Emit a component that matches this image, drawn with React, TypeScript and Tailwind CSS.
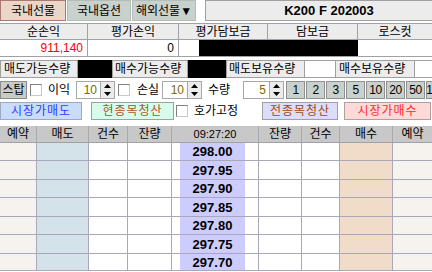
const F = "font-['Liberation_Sans','Noto_Sans_CJK_KR',sans-serif]";

const prices = ["298.00", "297.95", "297.90", "297.85", "297.80", "297.75", "297.70"];
const rowH = [18, 19, 18, 19, 18, 19, 17];

// order book columns: width, header, body background
const cols = [
	{ w: "w-[37px]", label: "예약", bg: "bg-[#f6f3ef]" },
	{ w: "w-[52px]", label: "매도", bg: "bg-[#d3e3e9]" },
	{ w: "w-[39px]", label: "건수", bg: "bg-white" },
	{ w: "w-[44px]", label: "잔량", bg: "bg-white" },
	{ w: "w-[87px]", label: "09:27:20", bg: "bg-white" },
	{ w: "w-[43px]", label: "잔량", bg: "bg-white" },
	{ w: "w-[38px]", label: "건수", bg: "bg-white" },
	{ w: "w-[53px]", label: "매수", bg: "bg-[#f0dcc9]" },
	{ w: "w-[39px]", label: "예약", bg: "bg-[#f6f3ef]" },
];

function Check() {
	return <div className="h-[12px] w-[12px] shrink-0 border border-t-[#808080] border-l-[#808080] border-r-[#c8c8c8] border-b-[#c8c8c8] bg-white" />;
}

function Spin({ value, inputW }: { value: string; inputW: string }) {
	return (
		<div className="flex h-[18px] shrink-0">
			<div className={`flex ${inputW} items-center justify-end border border-[#a8a8a8] bg-white pr-[3px] text-[12px] text-[#7a6a00]`}>
				{value}
			</div>
			<div className="flex w-[14px] flex-col border border-l-0 border-[#a8a8a8] bg-[#ececec]">
				<div className="flex flex-1 items-center justify-center">
					<svg width="7" height="4" viewBox="0 0 7 4">
						<path d="M3.5 0 L7 4 L0 4 Z" fill="#000" />
					</svg>
				</div>
				<div className="flex flex-1 items-center justify-center">
					<svg width="7" height="4" viewBox="0 0 7 4">
						<path d="M0 0 L7 0 L3.5 4 Z" fill="#000" />
					</svg>
				</div>
			</div>
		</div>
	);
}

export default function App() {
	return (
		<div className={`${F} h-[272px] w-[432px] overflow-hidden bg-white text-[12px] leading-none text-black`}>
			{/* market tabs + symbol */}
			<div className="flex h-[22px] items-start">
				<div className="flex h-[21px] w-[66px] items-center justify-center border border-[#a87a72] bg-[#e9d6c6] text-[12px]">국내선물</div>
				<div className="ml-[1px] flex h-[21px] w-[64px] items-center justify-center border border-[#b4bcb8] bg-[#c9d1cd]">국내옵션</div>
				<div className="ml-[1px] flex h-[21px] w-[64px] items-center justify-center border border-[#b4bcb8] bg-[#c9d1cd]">
					해외선물▼
				</div>
				<div className="ml-[9px] flex h-[21px] flex-1 items-center justify-center border border-r-0 border-[#a0a0a0] bg-[#ececec] pl-[20px] text-[13px] font-bold">
					K200 F 202003
				</div>
			</div>

			{/* P&L summary */}
			<div className="mt-[1px] grid h-[17px] grid-cols-[88px_91px_89px_90px_1fr] border-t border-b border-[#a0a0a8] bg-[#ececec]">
				<div className="flex items-center justify-center border-r border-[#a0a0a8]">순손익</div>
				<div className="flex items-center justify-center border-r border-[#a0a0a8]">평가손익</div>
				<div className="flex items-center justify-center border-r border-[#a0a0a8]">평가담보금</div>
				<div className="flex items-center justify-center border-r border-[#a0a0a8]">담보금</div>
				<div className="flex items-center justify-center">로스컷</div>
			</div>
			<div className="flex h-[17px] border-b border-[#a0a0a8]">
				<div className="flex w-[88px] items-center justify-end border-r border-[#a0a0a8] pr-[4px] text-[#ff0000]">911,140</div>
				<div className="flex w-[91px] items-center justify-end border-r border-[#a0a0a8] pr-[4px]">0</div>
				<div className="w-[20px]" />
				<div className="w-[159px] bg-black" />
				<div className="flex-1 bg-white" />
			</div>

			{/* quantities */}
			<div className="mt-[3px] flex h-[18px]">
				<div className="flex w-[78px] items-center border border-[#a0a0a0] bg-[#ececec] pl-[3px]">매도가능수량</div>
				<div className="w-[34px] bg-black" />
				<div className="flex w-[76px] items-center border border-[#a0a0a0] bg-[#ececec] pl-[2px]">매수가능수량</div>
				<div className="w-[38px] bg-black" />
				<div className="flex w-[79px] items-center border border-[#a0a0a0] bg-[#ececec] pl-[2px]">매도보유수량</div>
				<div className="w-[30px] border-y border-[#a0a0a0] bg-white" />
				<div className="flex w-[80px] items-center border border-[#a0a0a0] bg-[#ececec] pl-[3px]">매수보유수량</div>
				<div className="flex-1 border-y border-[#a0a0a0] bg-white" />
			</div>

			{/* stop / qty controls */}
			<div className="mt-[3px] flex h-[18px] items-center">
				<div className="flex h-[18px] w-[27px] shrink-0 items-center justify-center border border-[#8c8c8c] bg-[#c8ccc8]">스탑</div>
				<div className="ml-[3px]">
					<Check />
				</div>
				<div className="ml-[6px] w-[24px] shrink-0">이익</div>
				<div className="ml-[4px]">
					<Spin value="10" inputW="w-[25px]" />
				</div>
				<div className="ml-[3px]">
					<Check />
				</div>
				<div className="ml-[7px] w-[24px] shrink-0">손실</div>
				<div className="ml-[1px]">
					<Spin value="10" inputW="w-[26px]" />
				</div>
				<div className="ml-[6px] w-[24px] shrink-0">수량</div>
				<div className="ml-[11px]">
					<Spin value="5" inputW="w-[27px]" />
				</div>
				<div className="ml-[2px] flex gap-[1px]">
					{["1", "2", "3", "5", "10", "20", "50", "100"].map((n) => (
						<div
							key={n}
							className="flex h-[18px] w-[19px] shrink-0 items-center justify-center overflow-hidden border border-[#909090] bg-[#c9d1cd] text-[12px] tracking-[-0.5px]"
						>
							{n}
						</div>
					))}
				</div>
			</div>

			{/* order buttons */}
			<div className="mt-[3px] flex h-[18px] items-center">
				<div className="flex h-[18px] w-[82px] shrink-0 items-center justify-center border border-[#a0a8c0] bg-[#c9dcfb] tracking-[1px] text-[#2a3cff]">
					시장가매도
				</div>
				<div className="ml-[9px] flex h-[18px] w-[83px] shrink-0 items-center justify-center border border-[#a0a0a0] bg-[#d8fcec] tracking-[1px] text-[#b0561a]">
					현종목청산
				</div>
				<div className="ml-[2px]">
					<Check />
				</div>
				<div className="ml-[6px] w-[48px] shrink-0">호가고정</div>
				<div className="ml-[20px] flex h-[18px] w-[76px] shrink-0 items-center justify-center border border-[#a0a0a0] bg-[#dcdcfc] tracking-[1px] text-[#a04a10]">
					전종목청산
				</div>
				<div className="ml-[6px] flex h-[18px] w-[87px] shrink-0 items-center justify-center border border-[#b0a0a0] bg-[#ffd8d8] tracking-[1px] text-[#ff2a2a]">
					시장가매수
				</div>
			</div>

			{/* order book header */}
			<div className="mt-[6px] flex h-[17px] border-b border-[#a0a0a8] bg-[#c8c8c8]">
				{cols.map((c, i) => (
					<div
						key={i}
						className={`flex ${c.w} items-center justify-center ${i < cols.length - 1 ? "border-r border-[#a8a8b0]" : ""} ${
							i === 4 ? "text-[11px]" : ""
						}`}
					>
						{c.label}
					</div>
				))}
			</div>

			{/* order book rows */}
			{prices.map((p, r) => (
				<div key={p} className="flex border-b border-[#a8a8b8]" style={{ height: rowH[r] }}>
					{cols.map((c, i) =>
						i === 4 ? (
							<div key={i} className={`flex ${c.w} border-r border-[#a8a8b8] bg-white`}>
								<div className="w-[8px]" />
								<div className="flex w-[65px] items-center justify-center bg-[#ccccff] text-[13px] font-bold">{p}</div>
								<div className="flex-1" />
							</div>
						) : (
							<div key={i} className={`${c.w} ${c.bg} ${i < cols.length - 1 ? "border-r border-[#a8a8b8]" : ""}`} />
						),
					)}
				</div>
			))}
		</div>
	);
}
